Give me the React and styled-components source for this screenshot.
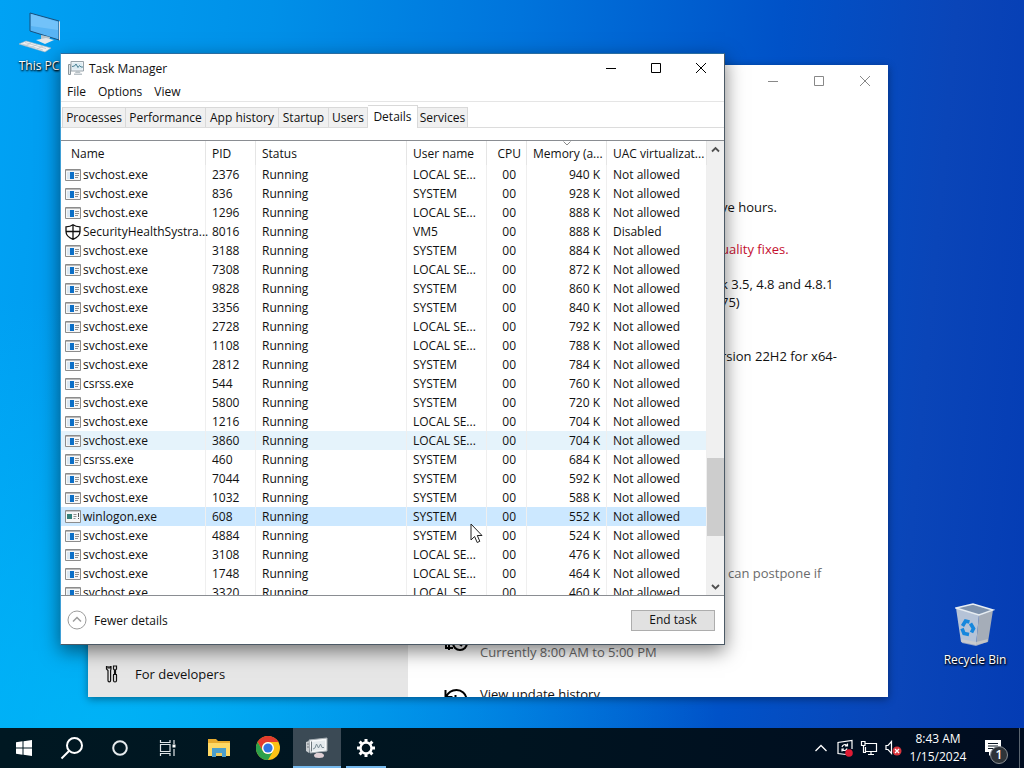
import styled, { createGlobalStyle } from "styled-components";

const colors = {
  white: "#ffffff",
  text: "#111111",
  muted: "#6b6b6b",
  red: "#c50f2e",
  line: "#e5e5e5",
  tab: "#f0f0f0",
  scroll: "#f0f0f0",
  thumb: "#cdcdcd",
  selected: "#cce8ff",
  hover: "#e5f3fb",
  underline: "#76b9ed",
};

const processes = [
  ["svchost.exe", 2376, "LOCAL SE...", 940],
  ["svchost.exe", 836, "SYSTEM", 928],
  ["svchost.exe", 1296, "LOCAL SE...", 888],
  ["SecurityHealthSystra...", 8016, "VM5", 888, "Disabled"],
  ["svchost.exe", 3188, "SYSTEM", 884],
  ["svchost.exe", 7308, "LOCAL SE...", 872],
  ["svchost.exe", 9828, "SYSTEM", 860],
  ["svchost.exe", 3356, "SYSTEM", 840],
  ["svchost.exe", 2728, "LOCAL SE...", 792],
  ["svchost.exe", 1108, "LOCAL SE...", 788],
  ["svchost.exe", 2812, "SYSTEM", 784],
  ["csrss.exe", 544, "SYSTEM", 760],
  ["svchost.exe", 5800, "SYSTEM", 720],
  ["svchost.exe", 1216, "LOCAL SE...", 704],
  ["svchost.exe", 3860, "LOCAL SE...", 704],
  ["csrss.exe", 460, "SYSTEM", 684],
  ["svchost.exe", 7044, "SYSTEM", 592],
  ["svchost.exe", 1032, "SYSTEM", 588],
  ["winlogon.exe", 608, "SYSTEM", 552],
  ["svchost.exe", 4884, "SYSTEM", 524],
  ["svchost.exe", 3108, "LOCAL SE...", 476],
  ["svchost.exe", 1748, "LOCAL SE...", 464],
  ["svchost.exe", 3320, "LOCAL SE...", 460],
];

const tabs = [
  ["Processes", 64],
  ["Performance", 80],
  ["App history", 73],
  ["Startup", 50],
  ["Users", 39],
  ["Details", 50],
  ["Services", 50],
];

const GlobalStyle = createGlobalStyle`
  * {
    box-sizing: border-box;
  }

  body {
    margin: 0;
    font-family: "Open Sans", "Noto Sans", sans-serif;
    font-size: 12px;
    color: ${colors.text};
  }

  button {
    font: inherit;
    color: inherit;
    border: none;
    padding: 0;
    background: none;
  }
`;

const Screen = styled.div`
  height: 100vh;
  display: flex;
  flex-direction: column;
  overflow: hidden;
`;

const Desktop = styled.main`
  position: relative;
  flex: 1;
  overflow: hidden;
  background:
    radial-gradient(ellipse 60% 60% at 10% 100%, rgba(0, 190, 250, 0.7), rgba(0, 180, 250, 0) 100%),
    linear-gradient(95deg, #00a2f4 0%, #0090e8 25%, #0074dc 48%, #0052c8 72%, #0a45b8 88%, #043cb4 100%);
`;

const Shortcut = styled.button`
  position: absolute;
  left: ${({ $x }) => $x}px;
  top: ${({ $y }) => $y}px;
  width: 76px;
  display: flex;
  flex-direction: column;
  align-items: center;
  gap: 5px;
  color: ${colors.white};
  line-height: 16px;
  text-shadow: 1px 1px 2px #000, 0 1px 2px #000;
`;

const Window = styled.section`
  position: absolute;
  left: ${({ $x }) => $x}px;
  top: ${({ $y }) => $y}px;
  width: ${({ $width }) => $width}px;
  height: ${({ $height }) => $height}px;
  display: flex;
  flex-direction: column;
  background: ${colors.white};
  overflow: hidden;
`;

const SettingsFrame = styled(Window)`
  font-size: 13px;
  box-shadow: 0 2px 8px rgba(0, 0, 0, 0.4);
`;

const TaskFrame = styled(Window)`
  border: 1px solid #4c5a66;
  border-left-color: #3f9fd6;
  border-top-color: #2a6ca0;
  box-shadow: 0 6px 18px rgba(0, 0, 0, 0.5);
`;

const TitleBar = styled.header`
  flex: none;
  height: ${({ $height }) => $height}px;
  display: flex;
  align-items: center;
`;

const TaskTitleBar = styled(TitleBar)`
  padding-right: 1px;
`;

const Title = styled.h1`
  flex: 1;
  display: flex;
  align-items: center;
  gap: 5px;
  margin: 0;
  padding-left: 7px;
  font-size: 12px;
  font-weight: 400;
`;

const Caption = styled.button`
  width: ${({ $width }) => $width}px;
  height: 28px;
  display: flex;
  align-items: center;
  justify-content: center;
  color: ${({ $faded }) => ($faded ? "#888888" : "#000000")};
`;

const SettingsBody = styled.div`
  flex: 1;
  min-height: 0;
  display: flex;
`;

const Sidebar = styled.nav`
  width: 40%;
  display: flex;
  flex-direction: column;
  justify-content: flex-end;
  background: #e6e6e6;
`;

const SidebarLink = styled.a`
  height: 46px;
  display: flex;
  align-items: center;
  gap: 16px;
  padding-left: 17px;
  color: ${colors.text};
  text-decoration: none;
  font-size: 13px;
`;

const SettingsContent = styled.div`
  flex: 1;
  padding-top: 101px;
`;

const Note = styled.p`
  margin: 0 0 ${({ $after }) => $after}px;
  padding-left: ${({ $indent }) => $indent || 313}px;
  line-height: 18px;
  white-space: pre-line;
  color: ${({ $color }) => $color || colors.text};
`;

const SettingsItem = styled.div`
  display: flex;
  align-items: flex-start;
  gap: 12px;
  margin-bottom: 24px;
  padding-left: 36px;
  line-height: 18px;
  color: ${({ $muted }) => ($muted ? colors.muted : colors.text)};

  svg {
    color: #000;
  }
`;

const ItemLabel = styled.span`
  padding-top: ${({ $low }) => ($low ? 14 : 0)}px;
`;

const Menu = styled.nav`
  flex: none;
  height: 20px;
  display: flex;
  border-bottom: 1px solid ${colors.line};
`;

const MenuItem = styled.button`
  padding: 1px 6px 0;
  line-height: 18px;
`;

const Tabs = styled.div`
  flex: none;
  display: flex;
  align-items: flex-end;
  height: 26px;
  padding-left: 1px;
  border-bottom: 1px solid #dcdcdc;
`;

const Tab = styled.button`
  width: ${({ $width }) => $width}px;
  height: ${({ $active }) => ($active ? 23 : 20)}px;
  padding-bottom: ${({ $active }) => ($active ? 2 : 0)}px;
  background: ${({ $active }) => ($active ? colors.white : colors.tab)};
  border: 1px solid #d9d9d9;
  border-left-width: ${({ $first }) => ($first ? 1 : 0)}px;
  border-bottom: none;
  margin-bottom: ${({ $active }) => ($active ? -1 : 0)}px;
  white-space: nowrap;
`;

const List = styled.div`
  flex: 1;
  min-height: 0;
  display: flex;
  margin-top: 12px;
  border-top: 1px solid #8a8d92;
  border-bottom: 1px solid #8a8d92;
`;

const TableArea = styled.div`
  flex: 1;
  overflow: hidden;
`;

const Table = styled.table`
  width: 100%;
  table-layout: fixed;
  border-collapse: separate;
  border-spacing: 0;
`;

const HeadCell = styled.th`
  position: relative;
  height: 24px;
  padding: 0 0 0 ${({ $first }) => ($first ? 10 : 6)}px;
  border-right: 1px solid ${colors.line};
  font-weight: 400;
  text-align: ${({ $right }) => ($right ? "right" : "left")};
  padding-right: ${({ $right }) => ($right ? 5 : 0)}px;
  white-space: nowrap;
`;

const SortMark = styled.svg`
  position: absolute;
  top: 0;
  left: 50%;
  margin-left: -4px;
`;

const Row = styled.tr`
  background: ${({ $state }) => colors[$state] || colors.white};
`;

const Cell = styled.td`
  height: 19px;
  padding: 0 ${({ $pad }) => $pad || 6}px 0 6px;
  border-right: 1px solid #efefef;
  line-height: 19px;
  text-align: ${({ $right }) => ($right ? "right" : "left")};
  white-space: nowrap;
`;

const NameCell = styled(Cell)`
  padding: 0 0 0 4px;
`;

const ProcessName = styled.div`
  display: flex;
  align-items: center;
  gap: 2px;
  height: 19px;

  svg {
    flex: none;
  }
`;

const ScrollBar = styled.div`
  width: 17px;
  display: flex;
  flex-direction: column;
  background: ${colors.scroll};
`;

const ScrollArrow = styled.button`
  height: 17px;
  display: flex;
  align-items: center;
  justify-content: center;
`;

const ScrollSpace = styled.div`
  flex: ${({ $size }) => $size};
`;

const ScrollThumb = styled.div`
  flex: 78;
  background: ${colors.thumb};
`;

const Footer = styled.footer`
  flex: none;
  height: 48px;
  display: flex;
  align-items: center;
  justify-content: space-between;
  padding: 0 9px 0 6px;
`;

const DetailsToggle = styled.button`
  display: flex;
  align-items: center;
  gap: 7px;
`;

const EndTask = styled.button`
  width: 84px;
  height: 21px;
  background: #e1e1e1;
  border: 1px solid #adadad;
  line-height: 18px;
`;

const Pointer = styled.svg`
  position: absolute;
  left: 470px;
  top: 523px;
`;

const TaskBar = styled.footer`
  flex: none;
  height: 40px;
  display: flex;
  justify-content: space-between;
  background: linear-gradient(90deg, #001822 0%, #001420 50%, #000c20 100%);
  color: ${colors.white};
`;

const TaskGroup = styled.div`
  display: flex;
  gap: ${({ $gap }) => $gap || 0}px;
`;

const TaskButton = styled.button`
  width: 48px;
  display: flex;
  align-items: center;
  justify-content: center;
  background: ${({ $active }) => ($active ? "#3b4a55" : "none")};
`;

const ActiveButton = styled(TaskButton)`
  border-bottom: 2px solid ${colors.underline};
  padding-top: 2px;
`;

const RunningButton = styled(ActiveButton)`
  width: 40px;
  margin: 0 4px;
`;

const Tray = styled.div`
  display: flex;
  align-items: stretch;
`;

const TrayButton = styled.button`
  width: 24px;
  display: flex;
  align-items: center;
  justify-content: center;
`;

const Clock = styled.button`
  width: 66px;
  line-height: 18px;
  text-align: center;
`;

const Notifications = styled.button`
  position: relative;
  width: 44px;
  display: flex;
  align-items: center;
  justify-content: center;
  margin-right: 4px;
`;

const Badge = styled.span`
  position: absolute;
  left: 19px;
  top: 18px;
  width: 18px;
  height: 18px;
  border: 1px solid #8a8f94;
  border-radius: 50%;
  background: #2e3338;
  font-size: 12px;
  font-weight: 600;
  line-height: 16px;
`;

const ShowDesktop = styled.button`
  width: 5px;
  border-left: 1px solid #5b6570;
`;

const CaptionIcon = ({ kind }) => (
  <svg width="12" height="12" viewBox="0 0 12 12" fill="none" stroke="currentColor">
    {kind === "Minimize" && <path d="M1 6.500h10" />}
    {kind === "Maximize" && <path d="M1.500 1.500h9v9h-9z" />}
    {kind === "Close" && <path d="M1 1l10 10M11 1L1 11" />}
  </svg>
);

const Captions = ({ width, faded }) =>
  ["Minimize", "Maximize", "Close"].map((kind) => (
    <Caption key={kind} aria-label={kind} $width={width} $faded={faded}>
      <CaptionIcon kind={kind} />
    </Caption>
  ));

const MonitorIcon = () => (
  <svg width="16" height="16" viewBox="0 0 16 16">
    <path d="M0.500 4.500h2v10h-2z" fill="#dfe5e8" stroke="#8b959b" />
    <path d="M3 1.500h12.500v9.500H3z" fill="#eef4f7" stroke="#98a3aa" />
    <path d="M4.500 3h9.500v6.500H4.500z" fill="#dcebf2" />
    <path d="M4 6.500l2.500-.5 1.500-2 2 3.500 1.500-2 1.500 1.500H15" fill="none" stroke="#4a8194" />
    <path d="M8 11h3.500l1 2h-5.500zM6 13.500h8v1.500H6z" fill="#b9c2c7" />
  </svg>
);

const TaskMonitorIcon = () => (
  <svg width="24" height="24" viewBox="0 0 24 24">
    <path d="M1 6l3-1v12l-3-2z" fill="#c8cdd0" />
    <path d="M2 8h2M2 11h2" stroke="#70777c" />
    <path d="M4 4l18-2v13l-17 2z" fill="#f5f7f8" stroke="#a5adb2" />
    <path d="M6.500 6l13.500-1.500v9L7 15z" fill="#e4eaed" />
    <path d="M8 13l2-1 1.500-4 2 4 2-4 1.500 3.500h2" fill="none" stroke="#7d8f98" />
    <path d="M6.500 5.500v10" stroke="#6d777d" />
    <path d="M11 17h6l1 2h-7z" fill="#b8b8bb" />
    <ellipse cx="14" cy="19.500" rx="5" ry="2.500" fill="#e0cfd4" />
  </svg>
);

const AppIcon = () => (
  <svg width="16" height="12" viewBox="0 0 16 12">
    <path d="M.5.5h15v11H.5z" fill="#f7f7f7" stroke="#8c8c8c" />
    <path d="M1 1h14v1H1z" fill="#b9b9b9" />
    <path d="M5 3h4v7H5z" fill="#0b6fc7" />
    <path d="M2 3h3v7H2z" fill="#dbe8f2" />
    <path d="M10 4.500h4M10 6.500h4M10 8.500h3" stroke="#8f8f8f" />
  </svg>
);

const LogonIcon = () => (
  <svg width="16" height="13" viewBox="0 0 16 13">
    <path d="M.5.5h15v12H.5z" fill="#f7f7f7" stroke="#8c8c8c" />
    <path d="M1 1.500h14" stroke="#c8c8c8" />
    <path d="M2 4h5v5H2z" fill="#33807a" />
    <path d="M8.500 4.500h3M8.500 6.500h3M8.500 8.500h2" stroke="#8f8f8f" />
    <path d="M13.500 3v4M13.500 8v1" stroke="#555" />
  </svg>
);

const ShieldIcon = () => (
  <svg width="16" height="16" viewBox="0 0 16 16" fill="#fff" stroke="#111" strokeWidth="1.300">
    <path d="M8 .8C6 2.300 3.500 2.800 1 2.800v4.700c0 3.800 3 6.300 7 7.800 4-1.500 7-4 7-7.800V2.800C12.500 2.800 10 2.300 8 .8zM8 1v14M1 7.500h14" />
  </svg>
);

const ProcessIcon = ({ name }) => {
  if (name.startsWith("Security")) return <ShieldIcon />;
  if (name === "winlogon.exe") return <LogonIcon />;
  return <AppIcon />;
};

const Chevron = ({ down, size = 9 }) => (
  <svg width={size} height={size} viewBox="0 0 9 9" fill="none" stroke="#505050" strokeWidth="1.800">
    <path d={down ? "M1 3l3.500 3.500L8 3" : "M1 6.500L4.500 3 8 6.500"} />
  </svg>
);

const PcIcon = () => (
  <svg width="44" height="44" viewBox="0 0 44 44">
    <path d="M13 4l29 8v19L13 22z" fill="#58b4f4" stroke="#17507d" />
    <path d="M14 5l27 8v8L14 17z" fill="#83cbfb" opacity=".6" />
    <path d="M42 12l1 .5v19l-1-.5z" fill="#d9e2e8" />
    <path d="M24 26l9 2-1 4-8-2z" fill="#b9c4cb" />
    <path d="M19 31l10-2 8 2-9 4z" fill="#e3e8eb" />
    <path d="M2 35l7-3 25 7-6 4z" fill="#eef1f3" stroke="#a2b4c0" strokeWidth=".6" />
    <path d="M5 35l21 6M8 33.500l21 6M8 37l6-3M14 38.500l6-3M20 40l6-3" stroke="#b5c2ca" strokeWidth=".7" />
  </svg>
);

const BinIcon = () => (
  <svg width="40" height="44" viewBox="0 0 40 44">
    <path d="M1 5l23 7-3 30-15-3z" fill="#c9d2da" opacity=".9" />
    <path d="M24 12l14-5-5 32-12 3z" fill="#a5adb8" />
    <path d="M1 5l17-4 20 6-14 5z" fill="#7f93ad" stroke="#e7edf2" strokeWidth="1.400" />
    <path d="M6 36l15 3 12-3-1 3-11 4-14-3z" fill="#d2cfcb" opacity=".7" />
    <g fill="none" stroke="#1687dd" strokeWidth="3.600">
      <path d="M7.500 23l3-5 4 1" />
      <path d="M15.500 20.500l3 5-2 4" />
      <path d="M14 31.500l-5-1-2-5" />
    </g>
  </svg>
);

const ToolsIcon = () => (
  <svg width="14" height="18" viewBox="0 0 14 18" fill="none" stroke="#111" strokeWidth="1.200">
    <path d="M1.500 1v3l1.500 1.500v10a1.300 1.300 0 0 0 2.600 0v-10L6 4V1M3 1v2h2V1" />
    <path d="M8.500 1h3v3l-1 1v4h-1V5l-1-1zM8 9.500h4M8.500 10v5.500a1.500 1.500 0 0 0 3 0V10" />
  </svg>
);

const ActiveHoursIcon = () => (
  <svg width="24" height="24" viewBox="0 0 24 24" fill="none" stroke="currentColor" strokeWidth="2">
    <circle cx="16" cy="14" r="7" />
    <path d="M15.500 10v5l2.500 2M2 16v3h7M5 15v6" />
  </svg>
);

const HistoryIcon = () => (
  <svg width="24" height="24" viewBox="0 0 24 24" fill="none" stroke="currentColor" strokeWidth="2">
    <path d="M1.500 5v7h7M2 12C4 7.500 8 5 12.500 5A10 10 0 1 1 3 18M11.500 10v6h5" />
  </svg>
);

const StartIcon = () => (
  <svg width="16" height="16" viewBox="0 0 16 16" fill="#fff">
    <path d="M0 2.200l6.500-.9v6.200H0zM7.500 1.200L16 0v7.500H7.500zM0 8.500h6.500v6.200L0 13.800zM7.500 8.500H16V16l-8.500-1.200z" />
  </svg>
);

const SearchIcon = () => (
  <svg width="24" height="24" viewBox="0 0 24 24" fill="none" stroke="#fff" strokeWidth="2">
    <circle cx="14.500" cy="9.500" r="7.500" />
    <path d="M9 15l-7.500 7.500" />
  </svg>
);

const TaskViewIcon = () => (
  <svg width="18" height="16" viewBox="0 0 18 16" fill="none" stroke="#dfe5e8" strokeWidth="1.200">
    <path d="M1.500 4.500h9.500v7H1.500zM1.500 0v2.500h9.500V0M1.500 16v-2.500h9.500V16M15 0v4M15 9v7" />
    <path d="M13.500 4.500h3v3h-3z" fill="#fff" stroke="none" />
  </svg>
);

const FolderIcon = () => (
  <svg width="22" height="20" viewBox="0 0 22 20">
    <path d="M0 1h8l2 2h12v15H0z" fill="#e8ab2e" />
    <path d="M0 5h22v13H0z" fill="#ffd965" />
    <path d="M4 10h14v9h-4v-4H8v4H4z" fill="#4b9ecb" />
    <path d="M8 15h6v3H8z" fill="#ecc95e" />
  </svg>
);

const ChromeIcon = () => (
  <svg width="24" height="24" viewBox="0 0 24 24">
    <circle cx="12" cy="12" r="12" fill="#fbc116" />
    <path d="M1.600 6A12 12 0 0 1 22.400 6H12a6 6 0 0 0-5.200 9z" fill="#e33b2e" />
    <path d="M1.600 6A12 12 0 0 0 12 24l5.200-9a6 6 0 0 1-10.400 0z" fill="#2da14b" />
    <circle cx="12" cy="12" r="6" fill="#fff" />
    <circle cx="12" cy="12" r="4.600" fill="#2f75e2" />
  </svg>
);

const GearIcon = () => (
  <svg width="20" height="20" viewBox="0 0 20 20" fill="none" stroke="#fff">
    <circle cx="10" cy="10" r="5.500" strokeWidth="2.400" />
    <g strokeWidth="3">
      <path d="M10 1v3M10 16v3M1 10h3M16 10h3M3.600 3.600l2.200 2.200M14.200 14.200l2.200 2.200M3.600 16.400l2.200-2.200M14.200 5.800l2.200-2.200" />
    </g>
  </svg>
);

const TrayChevron = () => (
  <svg width="14" height="8" viewBox="0 0 14 8" fill="none" stroke="#fff" strokeWidth="1.300">
    <path d="M1.500 7L7 1.500 12.500 7" />
  </svg>
);

const UpdateIcon = () => (
  <svg width="18" height="18" viewBox="0 0 18 18" fill="none" stroke="#fff" strokeWidth="1.200">
    <path d="M10 15.500l-8-1V3.500l14-2V10" />
    <path d="M6 8a3 3 0 0 1 5-1.500M11.500 4.500v2.500H9M11 9.500A3 3 0 0 1 6.500 11M6 12.500V10h2" />
    <circle cx="13" cy="14" r="3.800" fill="#e01b34" stroke="none" />
  </svg>
);

const NetworkIcon = () => (
  <svg width="18" height="16" viewBox="0 0 18 16" fill="none" stroke="#fff" strokeWidth="1.200">
    <path d="M5 3.500h11.500v8H5.500V7M8 14.500h6M11 11.500v3M1.500 1.500H5v4H1.500zM3.500 5.500v7H6" />
  </svg>
);

const SpeakerIcon = () => (
  <svg width="18" height="16" viewBox="0 0 18 16">
    <path d="M2 5.500h2l3.500-4v12l-3.500-4H2z" fill="none" stroke="#fff" strokeWidth="1.200" />
    <circle cx="13" cy="11" r="4.500" fill="#d8343c" />
    <path d="M11 9l4 4M15 9l-4 4" stroke="#fff" strokeWidth="1.300" />
  </svg>
);

const MessageIcon = () => (
  <svg width="18" height="18" viewBox="0 0 18 18">
    <path d="M1 1h16v12H9l-4 4v-4H1z" fill="#fff" />
    <path d="M4 4.500h10M4 7h10M4 9.500h7" stroke="#0b1824" />
  </svg>
);

const SettingsWindow = () => (
  <SettingsFrame $x={88} $y={65} $width={800} $height={632}>
    <TitleBar $height={32}>
      <Title as="div" />
      <Captions width={46} faded />
    </TitleBar>
    <SettingsBody>
      <Sidebar>
        <SidebarLink href="#developers">
          <ToolsIcon />
          For developers
        </SidebarLink>
      </Sidebar>
      <SettingsContent>
        <Note $after={24}>ve hours.</Note>
        <Note $after={17} $color={colors.red}>uality fixes.</Note>
        <Note $after={36}>{"k 3.5, 4.8 and 4.8.1\n75)"}</Note>
        <Note $after={199}>rsion 22H2 for x64-</Note>
        <Note $after={47} $indent={320} $color={colors.muted}>can postpone if</Note>
        <SettingsItem $muted>
          <ActiveHoursIcon />
          <ItemLabel $low>Currently 8:00 AM to 5:00 PM</ItemLabel>
        </SettingsItem>
        <SettingsItem>
          <HistoryIcon />
          <ItemLabel>View update history</ItemLabel>
        </SettingsItem>
      </SettingsContent>
    </SettingsBody>
  </SettingsFrame>
);

const ProcessRow = ({ process, state }) => {
  const [name, pid, user, memory, virtualization = "Not allowed"] = process;

  return (
    <Row $state={state}>
      <NameCell>
        <ProcessName>
          <ProcessIcon name={name} />
          {name}
        </ProcessName>
      </NameCell>
      <Cell>{pid}</Cell>
      <Cell>Running</Cell>
      <Cell>{user}</Cell>
      <Cell $right $pad={10}>00</Cell>
      <Cell $right>{memory} K</Cell>
      <Cell>{virtualization}</Cell>
    </Row>
  );
};

const rowState = (pid) => {
  if (pid === 608) return "selected";
  if (pid === 3860) return "hover";
  return "white";
};

const TaskManager = () => (
  <TaskFrame $x={60} $y={53} $width={665} $height={592}>
    <TaskTitleBar $height={28}>
      <Title>
        <MonitorIcon />
        Task Manager
      </Title>
      <Captions width={45} />
    </TaskTitleBar>
    <Menu>
      {["File", "Options", "View"].map((label) => (
        <MenuItem key={label}>{label}</MenuItem>
      ))}
    </Menu>
    <Tabs role="tablist">
      {tabs.map(([label, width], i) => (
        <Tab
          key={label}
          role="tab"
          aria-selected={label === "Details"}
          $width={width}
          $first={i === 0}
          $active={label === "Details"}
        >
          {label}
        </Tab>
      ))}
    </Tabs>
    <List>
      <TableArea>
        <Table>
          <colgroup>
            <col width="145" />
            <col width="50" />
            <col width="151" />
            <col width="80" />
            <col width="40" />
            <col width="80" />
            <col width="100" />
          </colgroup>
          <thead>
            <tr>
              <HeadCell $first>Name</HeadCell>
              <HeadCell>PID</HeadCell>
              <HeadCell>Status</HeadCell>
              <HeadCell>User name</HeadCell>
              <HeadCell $right>CPU</HeadCell>
              <HeadCell $right>
                <SortMark width="8" height="5" viewBox="0 0 8 5" fill="none" stroke="#8a8a8a">
                  <path d="M.5.5L4 4 7.500.5" />
                </SortMark>
                Memory (a...
              </HeadCell>
              <HeadCell>UAC virtualizat...</HeadCell>
            </tr>
          </thead>
          <tbody>
            {processes.map((process) => (
              <ProcessRow key={process[1]} process={process} state={rowState(process[1])} />
            ))}
          </tbody>
        </Table>
      </TableArea>
      <ScrollBar>
        <ScrollArrow aria-label="Scroll up">
          <Chevron />
        </ScrollArrow>
        <ScrollSpace $size={300} />
        <ScrollThumb />
        <ScrollSpace $size={42} />
        <ScrollArrow aria-label="Scroll down">
          <Chevron down />
        </ScrollArrow>
      </ScrollBar>
    </List>
    <Footer>
      <DetailsToggle>
        <svg width="20" height="20" viewBox="0 0 20 20" fill="none" stroke="#9c9c9c">
          <circle cx="10" cy="10" r="9" />
          <path d="M6 11.500l4-4 4 4" strokeWidth="1.500" />
        </svg>
        Fewer details
      </DetailsToggle>
      <EndTask>End task</EndTask>
    </Footer>
  </TaskFrame>
);

export default () => (
  <Screen>
    <GlobalStyle />
    <Desktop>
      <Shortcut $x={1} $y={9}>
        <PcIcon />
        This PC
      </Shortcut>
      <Shortcut $x={937} $y={603}>
        <BinIcon />
        Recycle Bin
      </Shortcut>
      <SettingsWindow />
      <TaskManager />
      <Pointer width="13" height="21" viewBox="0 0 13 21">
        <path d="M1 1v16l3.600-3.500 2.600 6 2.600-1.200L7.300 12.500h4.700z" fill="#fff" stroke="#222" />
      </Pointer>
    </Desktop>
    <TaskBar>
      <TaskGroup $gap={3}>
        <TaskGroup>
          <TaskButton aria-label="Start"><StartIcon /></TaskButton>
          <TaskButton aria-label="Search"><SearchIcon /></TaskButton>
          <TaskButton aria-label="Cortana">
            <svg width="16" height="16" viewBox="0 0 16 16" fill="none" stroke="#e6ebee" strokeWidth="2">
              <circle cx="8" cy="8" r="6.800" />
            </svg>
          </TaskButton>
          <TaskButton aria-label="Task View"><TaskViewIcon /></TaskButton>
        </TaskGroup>
        <TaskGroup $gap={1}>
          <TaskButton aria-label="File Explorer"><FolderIcon /></TaskButton>
          <TaskButton aria-label="Chrome"><ChromeIcon /></TaskButton>
          <ActiveButton aria-label="Task Manager" $active><TaskMonitorIcon /></ActiveButton>
          <RunningButton aria-label="Settings"><GearIcon /></RunningButton>
        </TaskGroup>
      </TaskGroup>
      <Tray>
        <TrayButton aria-label="Show hidden icons"><TrayChevron /></TrayButton>
        <TrayButton aria-label="Update"><UpdateIcon /></TrayButton>
        <TrayButton aria-label="Network"><NetworkIcon /></TrayButton>
        <TrayButton aria-label="Volume"><SpeakerIcon /></TrayButton>
        <Clock>
          8:43 AM
          <br />
          1/15/2024
        </Clock>
        <Notifications aria-label="Notifications">
          <MessageIcon />
          <Badge>1</Badge>
        </Notifications>
        <ShowDesktop aria-label="Show desktop" />
      </Tray>
    </TaskBar>
  </Screen>
);
